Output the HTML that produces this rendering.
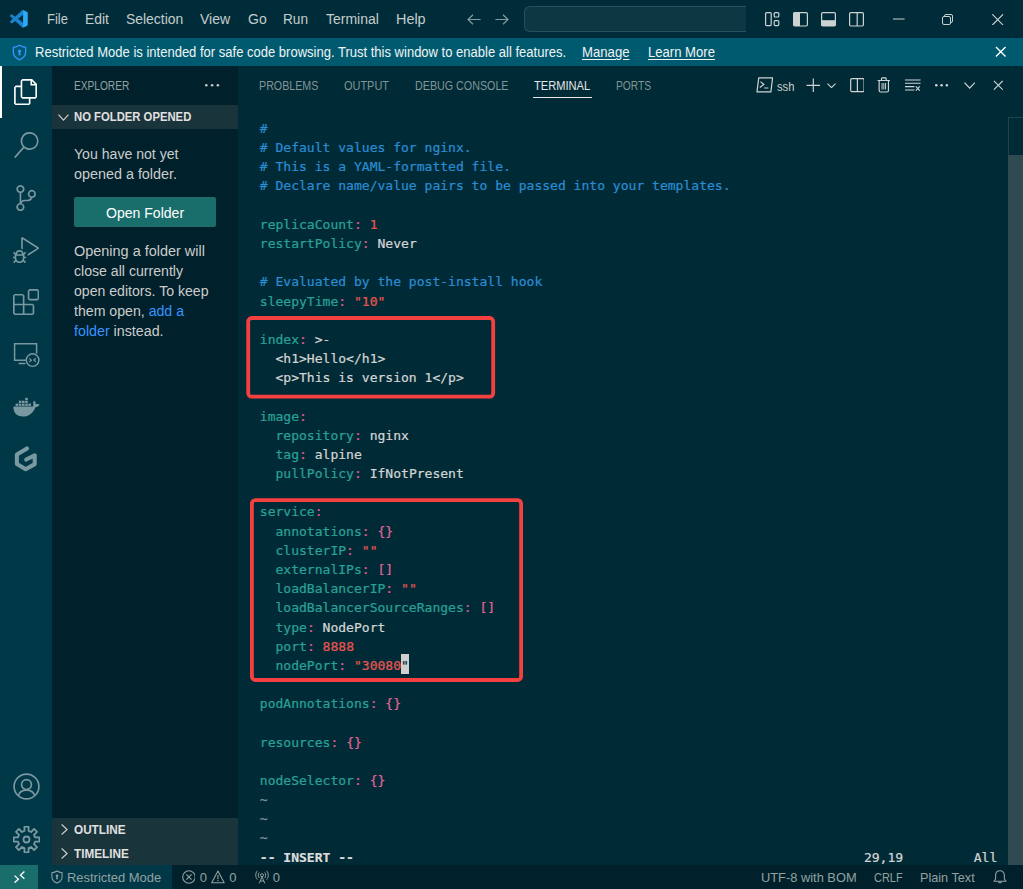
<!DOCTYPE html><html lang="en"><head><meta charset="utf-8"><title>Visual Studio Code</title><style>
*{margin:0;padding:0;box-sizing:border-box}
html,body{width:1023px;height:889px;overflow:hidden;background:#002b36}
body{position:relative;font-family:"Liberation Sans", sans-serif;font-size:14px;color:#cccccc;-webkit-font-smoothing:antialiased}
.abs,.t,.tl,svg.i{position:absolute}
.t{white-space:nowrap;line-height:20px;transform-origin:0 50%}
#title{left:0;top:0;width:1023px;height:38px;background:#002c39}
#banner{left:0;top:38px;width:1023px;height:28px;background:#005a6f}
#act{left:0;top:66px;width:52.3px;height:799.4px;background:#003847}
#side{left:52.3px;top:66px;width:185.7px;height:799.4px;background:#00212b}
#panel{left:238px;top:66px;width:785px;height:799px;background:#002b36}
#status{left:0;top:865.4px;width:1023px;height:23.6px;background:#00212b}
.menu{color:#c4cccc;font-size:14.2px}
.ban{color:#f0f4f4;font-size:14.2px}
.ban u{text-underline-offset:2px}
.tab{font-size:12px;color:#93a1a1e8;letter-spacing:0}
.tab.on{color:#e7e7e7}
.sb{color:#cccccc;font-size:14.2px}
.sb a{color:#3794ff;text-decoration:none}
.hdr{font-size:12px;font-weight:bold;color:#e0e0e0}
.st{font-size:13.1px;color:#93a1a1}
.tl{left:259.8px;height:19.175px;line-height:19.175px;font-family:"DejaVu Sans Mono", "Liberation Mono", monospace;font-size:13.04px;white-space:pre;color:#d0d0d0;-webkit-text-stroke:0.22px currentColor}
.c{color:#2b8cd4}.k{color:#2aa198}.p{color:#e25c92}.m{color:#e26496}.r{color:#e85551}.w{color:#d4d4d4}
.nt{color:#7e909a}
.b{font-weight:bold;color:#dcdcdc}
.cur{color:#002b36}
</style></head><body>
<div class="abs" id="title"></div><div class="abs" id="banner"></div><div class="abs" id="act"></div><div class="abs" id="side"></div><div class="abs" id="panel"></div><div class="abs" id="status"></div>
<svg class="i" style="left:10.30px;top:10.20px" width="17.60" height="17.60" viewBox="0 0 24 24" ><path d="M23.15 2.587L18.21.21a1.494 1.494 0 0 0-1.705.29l-9.46 8.63-4.12-3.128a.999.999 0 0 0-1.276.057L.327 7.261A1 1 0 0 0 .326 8.74L3.899 12 .326 15.26a1 1 0 0 0 .001 1.479L1.65 17.94a.999.999 0 0 0 1.276.057l4.12-3.128 9.46 8.63a1.492 1.492 0 0 0 1.704.29l4.942-2.377A1.5 1.5 0 0 0 24 20.06V3.939a1.5 1.5 0 0 0-.85-1.352zm-5.146 14.861L10.826 12l7.178-5.448v10.896z" fill="#1b84cf"/><path d="M18 .15 23.2 2.6 24 3.9V20.1L23.2 21.4 18 23.85Z" fill="#2aabf3"/></svg>
<div class="t menu" style="left:47.05px;top:9.00px;font-size:14px;transform:scaleX(0.9265);">File</div>
<div class="t menu" style="left:85.25px;top:9.00px;font-size:14px;transform:scaleX(0.9907);">Edit</div>
<div class="t menu" style="left:126.25px;top:9.00px;font-size:14px;transform:scaleX(0.9932);">Selection</div>
<div class="t menu" style="left:200.25px;top:9.00px;font-size:14px;transform:scaleX(1.0036);">View</div>
<div class="t menu" style="left:247.75px;top:9.00px;font-size:14px;transform:scaleX(1.0013);">Go</div>
<div class="t menu" style="left:283.35px;top:9.00px;font-size:14px;transform:scaleX(0.9734);">Run</div>
<div class="t menu" style="left:325.75px;top:9.00px;font-size:14px;transform:scaleX(0.9999);">Terminal</div>
<div class="t menu" style="left:395.55px;top:9.00px;font-size:14px;transform:scaleX(1.0280);">Help</div>
<svg class="i" style="left:466.50px;top:13.50px" width="14.00" height="11.00" viewBox="0 0 14 11" ><path d="M6 0.7 1 5.5 6 10.3M1 5.5H13.6" fill="none" stroke="#7f9aa0" stroke-width="1.2"/></svg>
<svg class="i" style="left:495.00px;top:13.50px" width="14.00" height="11.00" viewBox="0 0 14 11" ><path d="M8 0.7 13 5.5 8 10.3M13 5.5H0.4" fill="none" stroke="#7f9aa0" stroke-width="1.2"/></svg>
<div class="abs" style="left:524.2px;top:5.8px;width:221.6px;height:26px;background:#0c3844;border:1px solid #27505b;border-right:none;border-radius:6px 0 0 6px"></div>
<svg class="i" style="left:764.60px;top:11.50px" width="15.00" height="15.00" viewBox="0 0 15 15" ><rect x="0.6" y="0.6" width="5.6" height="13" rx="1" fill="none" stroke="#ccd2d2" stroke-width="1.2"/><rect x="9.2" y="0.6" width="4.6" height="4.4" rx="1" fill="none" stroke="#ccd2d2" stroke-width="1.2"/><rect x="9.2" y="8.6" width="4.6" height="5" rx="1" fill="none" stroke="#ccd2d2" stroke-width="1.2"/></svg>
<svg class="i" style="left:792.60px;top:11.50px" width="15.00" height="15.00" viewBox="0 0 15 15" ><rect x="0.6" y="0.6" width="13.8" height="13.4" rx="1.2" fill="none" stroke="#ccd2d2" stroke-width="1.2"/><rect x="0.6" y="0.6" width="6.4" height="13.4" fill="#ccd2d2"/></svg>
<svg class="i" style="left:820.50px;top:11.50px" width="15.00" height="15.00" viewBox="0 0 15 15" ><rect x="0.6" y="0.6" width="13.8" height="13.4" rx="1.2" fill="none" stroke="#ccd2d2" stroke-width="1.2"/><rect x="0.6" y="8.2" width="13.8" height="5.8" fill="#ccd2d2"/></svg>
<svg class="i" style="left:849.00px;top:11.50px" width="15.00" height="15.00" viewBox="0 0 15 15" ><rect x="0.6" y="0.6" width="13.8" height="13.4" rx="1.2" fill="none" stroke="#ccd2d2" stroke-width="1.2"/><path d="M8.2 0.6V14" stroke="#ccd2d2" stroke-width="1.2"/></svg>
<svg class="i" style="left:893.40px;top:18.00px" width="11.60" height="2.00" viewBox="0 0 11.6 2" ><path d="M0 1H11.6" stroke="#c8d0d0" stroke-width="1"/></svg>
<svg class="i" style="left:942.00px;top:13.50px" width="11.00" height="11.00" viewBox="0 0 11 11" ><rect x="0.5" y="2.5" width="8" height="8" rx="1.5" fill="none" stroke="#c8d0d0" stroke-width="1"/><path d="M2.5 2.5V2A1.5 1.5 0 0 1 4 .5H9A1.5 1.5 0 0 1 10.5 2V7A1.5 1.5 0 0 1 9 8.5H8.5" fill="none" stroke="#c8d0d0" stroke-width="1"/></svg>
<svg class="i" style="left:992.40px;top:13.50px" width="11.40" height="11.40" viewBox="0 0 11 11" ><path d="M0.3 0.3 10.7 10.7M10.7 0.3 0.3 10.7" stroke="#c8d0d0" stroke-width="1.1"/></svg>
<svg class="i" style="left:11.10px;top:43.50px" width="17.00" height="17.00" viewBox="0 0 16 16" ><path d="M8 1.2C6.3 2.4 4.4 3 2.2 3.1V7.6C2.2 11 4.4 13.5 8 14.9 11.6 13.5 13.8 11 13.8 7.6V3.1C11.6 3 9.7 2.4 8 1.2Z" fill="none" stroke="#3794ff" stroke-width="1.2"/><circle cx="8" cy="6.6" r="1.5" fill="#3794ff"/><path d="M7.3 7.5H8.7L9 10.6H7Z" fill="#3794ff"/></svg>
<div class="t ban" style="left:35.35px;top:42.40px;font-size:14px;transform:scaleX(0.9298);">Restricted Mode is intended for safe code browsing. Trust this window to enable all features.</div>
<div class="t ban" style="left:581.55px;top:42.40px;font-size:14px;transform:scaleX(0.9389);"><u>Manage</u></div>
<div class="t ban" style="left:648.05px;top:42.40px;font-size:14px;transform:scaleX(0.9345);"><u>Learn More</u></div>
<svg class="i" style="left:995.00px;top:46.20px" width="11.50" height="11.50" viewBox="0 0 12 12" ><path d="M1 1 11 11M11 1 1 11" stroke="#ffffff" stroke-width="1.4"/></svg>
<div class="abs" style="left:0;top:66px;width:2px;height:52.4px;background:#ffffff"></div>
<svg class="i" style="left:12.90px;top:78.90px" width="26.20" height="26.20" viewBox="0 0 24 24" ><path d="M17.5 0h-9L7 1.5V6H2.5L1 7.5v15.07L2.5 24h12.07L16 22.57V18h4.7l1.3-1.43V4.5L17.5 0zm0 2.12l2.38 2.38H17.5V2.12zm-3 20.38h-12v-15H7v9.07L8.5 18h6v4.5zm6-6h-12v-15H16V6h4.5v10.5z" fill="#ffffff"/></svg>
<svg class="i" style="left:12.90px;top:132.30px" width="26.20" height="26.20" viewBox="0 0 24 24" ><path d="M15.25 0a8.25 8.25 0 0 0-6.18 13.72L1 22.88l1.12 1.12 8.05-9.12A8.251 8.251 0 1 0 15.25.01V0zm0 15a6.75 6.75 0 1 1 0-13.5 6.75 6.75 0 0 1 0 13.5z" fill="#7a98a0"/></svg>
<svg class="i" style="left:12.90px;top:184.90px" width="26.20" height="26.20" viewBox="0 0 24 24" ><path d="M21.007 8.222A3.738 3.738 0 0 0 15.045 5.2a3.737 3.737 0 0 0 1.156 6.583 2.988 2.988 0 0 1-2.668 1.67h-2.99a4.456 4.456 0 0 0-2.989 1.165V7.4a3.737 3.737 0 1 0-1.494 0v9.117a3.776 3.776 0 1 0 1.816.099 2.99 2.99 0 0 1 2.668-1.667h2.99a4.484 4.484 0 0 0 4.223-3.039 3.736 3.736 0 0 0 3.25-3.687zM4.565 3.738a2.242 2.242 0 1 1 4.484 0 2.242 2.242 0 0 1-4.484 0zm4.484 16.441a2.242 2.242 0 1 1-4.484 0 2.242 2.242 0 0 1 4.484 0zm8.221-9.715a2.242 2.242 0 1 1 0-4.485 2.242 2.242 0 0 1 0 4.485z" fill="#7a98a0"/></svg>
<svg class="i" style="left:12.90px;top:236.50px" width="26.20" height="26.20" viewBox="0 0 24 24" ><path d="M10.94 13.5l-1.32 1.32a3.73 3.73 0 0 0-7.24 0L1.06 13.5 0 14.56l1.72 1.72-.22.22V18H0v1.5h1.5v.08c.077.489.214.966.41 1.42L0 22.94 1.06 24l1.65-1.65A4.308 4.308 0 0 0 6 24a4.31 4.31 0 0 0 3.29-1.65L10.94 24 12 22.94 10.09 21c.198-.464.336-.951.41-1.45v-.1H12V18h-1.5v-1.5l-.22-.22L12 14.56l-1.06-1.06zM6 13.5a2.25 2.25 0 0 1 2.25 2.25h-4.5A2.25 2.25 0 0 1 6 13.5zm3 6a3.33 3.33 0 0 1-3 3 3.33 3.33 0 0 1-3-3v-2.25h6v2.25zm14.76-9.9v1.26L13.5 17.37V15.6l8.5-5.37L9 2v9.46a5.07 5.07 0 0 0-1.5-.72V.63L8.64 0l15.12 9.6z" fill="#7a98a0"/></svg>
<svg class="i" style="left:12.90px;top:289.10px" width="26.20" height="26.20" viewBox="0 0 24 24" ><path d="M13.5 1.5L15 0h7.5L24 1.5V9l-1.5 1.5H15L13.5 9V1.5zm1.5 0V9h7.5V1.5H15zM0 15V6l1.5-1.5H9L10.5 6v7.5H18l1.5 1.5v7.5L18 24H1.5L0 22.5V15zm9-1.5V6H1.5v7.5H9zM9 15H1.5v7.5H9V15zm1.5 7.5H18V15h-7.5v7.5z" fill="#7a98a0"/></svg>
<svg class="i" style="left:13.00px;top:342.20px" width="28.00" height="28.00" viewBox="0 0 28 28" ><path d="M12.9 18.3H1.6V1.7H23.6V11.4" fill="none" stroke="#7a98a0" stroke-width="1.5"/><path d="M5.6 21.5H12.4" stroke="#7a98a0" stroke-width="1.5"/><circle cx="19.6" cy="18.1" r="6.3" fill="none" stroke="#7a98a0" stroke-width="1.4"/><path d="M16.4 16.4 18.3 18.2 16.4 20M22.8 16.2 20.9 18 22.8 19.8" fill="none" stroke="#7a98a0" stroke-width="1.2"/></svg>
<svg class="i" style="left:13.00px;top:396.80px" width="27.00" height="21.00" viewBox="0 0 27 21" ><path d="M0.4 9.6H19.6C20.3 9.5 20.7 8.2 20.2 6.4 19.9 5.4 20.4 4.4 21.2 3.8 22.4 4.8 22.9 6.2 22.7 7.3 23.9 6.7 25.4 6.9 26.6 7.6 25.8 9.4 24.2 10.2 22.4 10.2 20.4 15.6 16.2 19.6 9.8 19.6 3.6 19.6 0.2 15.6 0.4 9.6Z" fill="#7a98a0"/><g fill="#7a98a0"><rect x="2.6" y="6.6" width="2.6" height="2.3"/><rect x="5.8" y="6.6" width="2.6" height="2.3"/><rect x="9" y="6.6" width="2.6" height="2.3"/><rect x="12.2" y="6.6" width="2.6" height="2.3"/><rect x="15.4" y="6.6" width="2.6" height="2.3"/><rect x="5.8" y="3.7" width="2.6" height="2.3"/><rect x="9" y="3.7" width="2.6" height="2.3"/><rect x="12.2" y="3.7" width="2.6" height="2.3"/><rect x="12.2" y="0.8" width="2.6" height="2.3"/></g></svg>
<svg class="i" style="left:12.00px;top:444.00px" width="28.00" height="30.00" viewBox="12 444 28 30" ><path d="M27.0 448.5 16.9 454.5V464.1L25.7 469.3 34.7 464.1V455.3L26.2 459.5" fill="none" stroke="#7a98a0" stroke-width="4.1" stroke-linejoin="round" stroke-linecap="round"/></svg>
<svg class="i" style="left:12.50px;top:772.90px" width="27.00" height="27.00" viewBox="0 0 27 27" ><circle cx="13.5" cy="13.5" r="12.4" fill="none" stroke="#7a98a0" stroke-width="1.7"/><circle cx="13.5" cy="11.6" r="4.9" fill="none" stroke="#7a98a0" stroke-width="1.7"/><path d="M5.4 22.6C6.4 19 9.6 17.2 13.5 17.2 17.4 17.2 20.6 19 21.6 22.6" fill="none" stroke="#7a98a0" stroke-width="1.7"/></svg>
<svg class="i" style="left:12.50px;top:825.70px" width="27.00" height="27.00" viewBox="0 0 27 27" ><path d="M11.45 4.94 L11.47 0.66 L15.53 0.66 L15.55 4.94 L18.10 6.00 L21.14 2.98 L24.02 5.86 L21.00 8.90 L22.06 11.45 L26.34 11.47 L26.34 15.53 L22.06 15.55 L21.00 18.10 L24.02 21.14 L21.14 24.02 L18.10 21.00 L15.55 22.06 L15.53 26.34 L11.47 26.34 L11.45 22.06 L8.90 21.00 L5.86 24.02 L2.98 21.14 L6.00 18.10 L4.94 15.55 L0.66 15.53 L0.66 11.47 L4.94 11.45 L6.00 8.90 L2.98 5.86 L5.86 2.98 L8.90 6.00Z" fill="none" stroke="#7a98a0" stroke-width="1.8" stroke-linejoin="round"/><circle cx="13.5" cy="13.5" r="3.0" fill="none" stroke="#7a98a0" stroke-width="1.8"/></svg>
<div class="t tab" style="left:73.95px;top:75.60px;font-size:12px;transform:scaleX(0.8461);color:#93a1a1">EXPLORER</div>
<svg class="i" style="left:205.40px;top:84.20px" width="14.20" height="2.60" viewBox="0 0 14.20 2.60" ><circle cx="1.30" cy="1.30" r="1.30" fill="#c8c8c8"/><circle cx="7.10" cy="1.30" r="1.30" fill="#c8c8c8"/><circle cx="12.90" cy="1.30" r="1.30" fill="#c8c8c8"/></svg>
<div class="abs" style="left:52.3px;top:104.5px;width:185.7px;height:24.2px;background:#1a343c"></div>
<svg class="i" style="left:57.50px;top:113.50px" width="11.00" height="7.00" viewBox="0 0 11 7" ><path d="M0.5 0.6 5.50 6.10 10.50 0.6" fill="none" stroke="#cccccc" stroke-width="1.2"/></svg>
<div class="t hdr" style="left:73.95px;top:107.00px;font-size:12px;transform:scaleX(0.9408);">NO FOLDER OPENED</div>
<div class="t sb" style="left:73.95px;top:144.00px;font-size:14px;transform:scaleX(1.0068);">You have not yet</div>
<div class="t sb" style="left:73.95px;top:164.00px;font-size:14px;transform:scaleX(1.0257);">opened a folder.</div>
<div class="abs" style="left:74px;top:196.9px;width:142.2px;height:29.8px;background:#196e6c;border-radius:2px"></div>
<div class="t sb" style="left:106.25px;top:203.00px;font-size:14px;transform:scaleX(1.0036);color:#ffffff;">Open Folder</div>
<div class="t sb" style="left:73.95px;top:240.90px;font-size:14px;transform:scaleX(1.0319);">Opening a folder will</div>
<div class="t sb" style="left:73.95px;top:260.80px;font-size:14px;transform:scaleX(1.0078);">close all currently</div>
<div class="t sb" style="left:73.95px;top:280.80px;font-size:14px;transform:scaleX(1.0066);">open editors. To keep</div>
<div class="t sb" style="left:73.95px;top:300.90px;font-size:14px;transform:scaleX(1.0094);">them open, <a>add a</a></div>
<div class="t sb" style="left:73.95px;top:320.70px;font-size:14px;transform:scaleX(1.0177);"><a>folder</a> instead.</div>
<div class="abs" style="left:52.3px;top:817.5px;width:185.7px;height:47.9px;background:#1a343c"></div>
<svg class="i" style="left:61.00px;top:823.50px" width="7.00" height="11.00" viewBox="0 0 7 11" ><path d="M0.6 0.5 6.10 5.50 0.6 10.50" fill="none" stroke="#cccccc" stroke-width="1.2"/></svg>
<svg class="i" style="left:61.00px;top:847.50px" width="7.00" height="11.00" viewBox="0 0 7 11" ><path d="M0.6 0.5 6.10 5.50 0.6 10.50" fill="none" stroke="#cccccc" stroke-width="1.2"/></svg>
<div class="t hdr" style="left:73.95px;top:819.50px;font-size:12px;transform:scaleX(0.9779);">OUTLINE</div>
<div class="t hdr" style="left:73.95px;top:843.50px;font-size:12px;transform:scaleX(0.9786);">TIMELINE</div>
<div class="t tab" style="left:258.85px;top:75.60px;font-size:12px;transform:scaleX(0.8907);">PROBLEMS</div>
<div class="t tab" style="left:343.85px;top:75.60px;font-size:12px;transform:scaleX(0.9122);">OUTPUT</div>
<div class="t tab" style="left:414.95px;top:75.60px;font-size:12px;transform:scaleX(0.8931);">DEBUG CONSOLE</div>
<div class="t tab on" style="left:534.05px;top:75.60px;font-size:12px;transform:scaleX(0.9263);">TERMINAL</div>
<div class="t tab" style="left:615.85px;top:75.60px;font-size:12px;transform:scaleX(0.8536);">PORTS</div>
<div class="abs" style="left:533px;top:97px;width:59px;height:1px;background:#e7e7e7"></div>
<svg class="i" style="left:755.70px;top:77.40px" width="17.60" height="15.80" viewBox="0 0 18 16" ><path d="M2.8 0.8H17L15.2 15.2H1Z" fill="none" stroke="#d0d4d4" stroke-width="1.2" stroke-linejoin="round"/><path d="M4.6 4.6 8 7.6 3.9 10.6M8.4 11.2H12.6" fill="none" stroke="#d0d4d4" stroke-width="1.2"/></svg>
<svg class="i" style="left:806.20px;top:77.60px" width="14.60" height="14.60" viewBox="0 0 15 15" ><path d="M7.5 0.5V14.5M0.5 7.5H14.5" stroke="#d0d4d4" stroke-width="1.2"/></svg>
<svg class="i" style="left:826.80px;top:82.60px" width="9.00" height="5.50" viewBox="0 0 9 5.5" ><path d="M0.5 0.6 4.50 4.60 8.50 0.6" fill="none" stroke="#d0d4d4" stroke-width="1.1"/></svg>
<svg class="i" style="left:849.50px;top:77.80px" width="14.80" height="14.80" viewBox="0 0 15 15" ><rect x="0.7" y="0.7" width="13.6" height="13.2" rx="1.2" fill="none" stroke="#d0d4d4" stroke-width="1.2"/><path d="M7.5 0.7V14" stroke="#d0d4d4" stroke-width="1.2"/></svg>
<svg class="i" style="left:877.20px;top:77.00px" width="13.60" height="16.00" viewBox="0 0 14 16" ><path d="M0.6 3.4H13.4M4.6 3.2V1.4Q4.6 0.7 5.4 0.7H8.6Q9.4 0.7 9.4 1.4V3.2" fill="none" stroke="#d0d4d4" stroke-width="1.2"/><path d="M2.2 3.6V13.6Q2.2 15.2 3.8 15.2H10.2Q11.8 15.2 11.8 13.6V3.6" fill="none" stroke="#d0d4d4" stroke-width="1.2"/><path d="M5.2 6V12.6M7 6V12.6M8.8 6V12.6" stroke="#d0d4d4" stroke-width="1"/></svg>
<svg class="i" style="left:905.20px;top:79.40px" width="16.40" height="12.40" viewBox="0 0 16.4 12.4" ><path d="M0 1H15.6M0 4.3H15.6M0 7.7H9.4M0 11H9.4" stroke="#d0d4d4" stroke-width="1.15"/><path d="M10.8 7.4 14.8 11.6M14.8 7.4 10.8 11.6" stroke="#d0d4d4" stroke-width="1.1"/></svg>
<svg class="i" style="left:935.00px;top:84.20px" width="13.20" height="2.60" viewBox="0 0 13.20 2.60" ><circle cx="1.30" cy="1.30" r="1.30" fill="#d0d4d4"/><circle cx="6.60" cy="1.30" r="1.30" fill="#d0d4d4"/><circle cx="11.90" cy="1.30" r="1.30" fill="#d0d4d4"/></svg>
<svg class="i" style="left:963.90px;top:82.30px" width="11.40" height="7.00" viewBox="0 0 11.4 7" ><path d="M0.5 0.6 5.70 6.10 10.90 0.6" fill="none" stroke="#d0d4d4" stroke-width="1.2"/></svg>
<svg class="i" style="left:992.60px;top:80.40px" width="10.60" height="10.60" viewBox="0 0 12 12" ><path d="M1 1 11 11M11 1 1 11" stroke="#d0d4d4" stroke-width="1.3"/></svg>
<div class="t sb" style="left:777.15px;top:76.50px;font-size:13px;transform:scaleX(0.8650);color:#cccccc">ssh</div>
<div class="abs" style="left:1008px;top:117px;width:15px;height:38px;border-left:1px solid #1f444d;border-top:1px solid #1f444d"></div>
<div class="abs" style="left:1008px;top:155px;width:15px;height:710.4px;background:#304a51"></div>
<div class="abs" style="left:400.95px;top:654.4px;width:7.95px;height:19.3px;background:#cfcfcf"></div>
<div class="tl" style="top:118.95px"><span class="c">#</span></div>
<div class="tl" style="top:138.12px"><span class="c"># Default values for nginx.</span></div>
<div class="tl" style="top:157.30px"><span class="c"># This is a YAML-formatted file.</span></div>
<div class="tl" style="top:176.47px"><span class="c"># Declare name/value pairs to be passed into your templates.</span></div>
<div class="tl" style="top:214.82px"><span class="k">replicaCount</span><span class="p">:</span><span class="w"> </span><span class="r">1</span></div>
<div class="tl" style="top:234.00px"><span class="k">restartPolicy</span><span class="p">:</span><span class="w"> Never</span></div>
<div class="tl" style="top:272.35px"><span class="c"># Evaluated by the post-install hook</span></div>
<div class="tl" style="top:291.52px"><span class="k">sleepyTime</span><span class="p">:</span><span class="w"> </span><span class="r">"10"</span></div>
<div class="tl" style="top:329.88px"><span class="k">index</span><span class="p">:</span><span class="w"> &gt;-</span></div>
<div class="tl" style="top:349.05px"><span class="w">  &lt;h1&gt;Hello&lt;/h1&gt;</span></div>
<div class="tl" style="top:368.23px"><span class="w">  &lt;p&gt;This is version 1&lt;/p&gt;</span></div>
<div class="tl" style="top:406.57px"><span class="k">image</span><span class="p">:</span></div>
<div class="tl" style="top:425.75px"><span class="k">  repository</span><span class="p">:</span><span class="w"> nginx</span></div>
<div class="tl" style="top:444.93px"><span class="k">  tag</span><span class="p">:</span><span class="w"> alpine</span></div>
<div class="tl" style="top:464.10px"><span class="k">  pullPolicy</span><span class="p">:</span><span class="w"> IfNotPresent</span></div>
<div class="tl" style="top:502.45px"><span class="k">service</span><span class="p">:</span></div>
<div class="tl" style="top:521.62px"><span class="k">  annotations</span><span class="p">:</span><span class="w"> </span><span class="m">{}</span></div>
<div class="tl" style="top:540.80px"><span class="k">  clusterIP</span><span class="p">:</span><span class="w"> </span><span class="r">""</span></div>
<div class="tl" style="top:559.98px"><span class="k">  externalIPs</span><span class="p">:</span><span class="w"> </span><span class="m">[]</span></div>
<div class="tl" style="top:579.15px"><span class="k">  loadBalancerIP</span><span class="p">:</span><span class="w"> </span><span class="r">""</span></div>
<div class="tl" style="top:598.33px"><span class="k">  loadBalancerSourceRanges</span><span class="p">:</span><span class="w"> </span><span class="m">[]</span></div>
<div class="tl" style="top:617.50px"><span class="k">  type</span><span class="p">:</span><span class="w"> NodePort</span></div>
<div class="tl" style="top:636.67px"><span class="k">  port</span><span class="p">:</span><span class="w"> </span><span class="r">8888</span></div>
<div class="tl" style="top:655.85px"><span class="k">  nodePort</span><span class="p">:</span><span class="w"> </span><span class="r">"30080</span><span class="cur">"</span></div>
<div class="tl" style="top:694.20px"><span class="k">podAnnotations</span><span class="p">:</span><span class="w"> </span><span class="m">{}</span></div>
<div class="tl" style="top:732.55px"><span class="k">resources</span><span class="p">:</span><span class="w"> </span><span class="m">{}</span></div>
<div class="tl" style="top:770.90px"><span class="k">nodeSelector</span><span class="p">:</span><span class="w"> </span><span class="m">{}</span></div>
<div class="tl" style="top:790.08px"><span class="nt">~</span></div>
<div class="tl" style="top:809.25px"><span class="nt">~</span></div>
<div class="tl" style="top:828.42px"><span class="nt">~</span></div>
<div class="tl" style="top:847.60px"><span class="b">-- INSERT --</span><span class="w">                                                                 29,19         All</span></div>
<svg class="i" style="left:240px;top:310px" width="300" height="380" viewBox="240 310 300 380"><rect x="248.2" y="318" width="245" height="78.7" rx="3.4" fill="none" stroke="#f54040" stroke-width="3.8"/><rect x="251.9" y="500.1" width="269.2" height="179.9" rx="3.4" fill="none" stroke="#f54040" stroke-width="3.8"/></svg>
<div class="abs" style="left:0;top:865.4px;width:37.5px;height:23.6px;background:#196e6c"></div>
<svg class="i" style="left:13.50px;top:871.00px" width="11.00" height="12.00" viewBox="0 0 11 12" ><path d="M0.6 4.6 4.4 8.2 0.6 11.6M10.4 0.6 6.4 4.2 10.4 7.8" fill="none" stroke="#ffffff" stroke-width="1.3"/></svg>
<div class="abs" style="left:37.5px;top:865.4px;width:134.9px;height:23.6px;background:#003847"></div>
<svg class="i" style="left:49.50px;top:870.00px" width="14.00" height="14.00" viewBox="0 0 16 16" ><path d="M8 1.2C6.3 2.4 4.4 3 2.2 3.1V7.6C2.2 11 4.4 13.5 8 14.9 11.6 13.5 13.8 11 13.8 7.6V3.1C11.6 3 9.7 2.4 8 1.2Z" fill="none" stroke="#93a1a1" stroke-width="1.2"/><circle cx="8" cy="6.6" r="1.5" fill="#93a1a1"/><path d="M7.3 7.5H8.7L9 10.6H7Z" fill="#93a1a1"/></svg>
<div class="t st" style="left:66.95px;top:867.60px;font-size:13px;transform:scaleX(0.9952);">Restricted Mode</div>
<svg class="i" style="left:181.50px;top:869.70px" width="13.90" height="13.90" viewBox="0 0 14 14" ><circle cx="7" cy="7" r="6.3" fill="none" stroke="#93a1a1" stroke-width="1.1"/><path d="M4.4 4.4 9.6 9.6M9.6 4.4 4.4 9.6" stroke="#93a1a1" stroke-width="1.1"/></svg>
<div class="t st" style="left:199.85px;top:867.60px;font-size:13px;transform:scaleX(1.0000);">0</div>
<svg class="i" style="left:211.00px;top:869.90px" width="13.90" height="13.90" viewBox="0 0 14 14" ><path d="M7 1 13.3 12.8H0.7Z" fill="none" stroke="#93a1a1" stroke-width="1.1" stroke-linejoin="round"/><path d="M7 5V9.2M7 10.2V11.4" stroke="#93a1a1" stroke-width="1.1"/></svg>
<div class="t st" style="left:229.15px;top:867.60px;font-size:13px;transform:scaleX(1.0000);">0</div>
<svg class="i" style="left:254.70px;top:870.00px" width="14.00" height="14.00" viewBox="0 0 14 14" ><circle cx="7" cy="5.2" r="1.5" fill="none" stroke="#93a1a1" stroke-width="1"/><path d="M7 6.8 4.2 13.4M7 6.8 9.8 13.4M5.2 11H8.8" fill="none" stroke="#93a1a1" stroke-width="1"/><path d="M4.3 2.4C3 3.8 3 6.6 4.3 8M9.7 2.4C11 3.8 11 6.6 9.7 8M2.4 0.8C0.2 3.2 0.2 7.2 2.4 9.6M11.6 0.8C13.8 3.2 13.8 7.2 11.6 9.6" fill="none" stroke="#93a1a1" stroke-width="1"/></svg>
<div class="t st" style="left:272.85px;top:867.60px;font-size:13px;transform:scaleX(1.0000);">0</div>
<div class="t st" style="left:761.15px;top:867.60px;font-size:13px;transform:scaleX(0.9877);">UTF-8 with BOM</div>
<div class="t st" style="left:873.85px;top:867.60px;font-size:13px;transform:scaleX(0.8424);">CRLF</div>
<div class="t st" style="left:919.55px;top:867.60px;font-size:13px;transform:scaleX(0.9745);">Plain Text</div>
<svg class="i" style="left:992.50px;top:870.00px" width="14.00" height="14.00" viewBox="0 0 14 14" ><path d="M1 11.2H13L11.4 9V5.4C11.4 2.6 9.6 0.8 7 0.8 4.4 0.8 2.6 2.6 2.6 5.4V9Z" fill="none" stroke="#93a1a1" stroke-width="1.1" stroke-linejoin="round"/><path d="M5.6 11.4C5.6 13.2 8.4 13.2 8.4 11.4" fill="none" stroke="#93a1a1" stroke-width="1.1"/></svg>
</body></html>
